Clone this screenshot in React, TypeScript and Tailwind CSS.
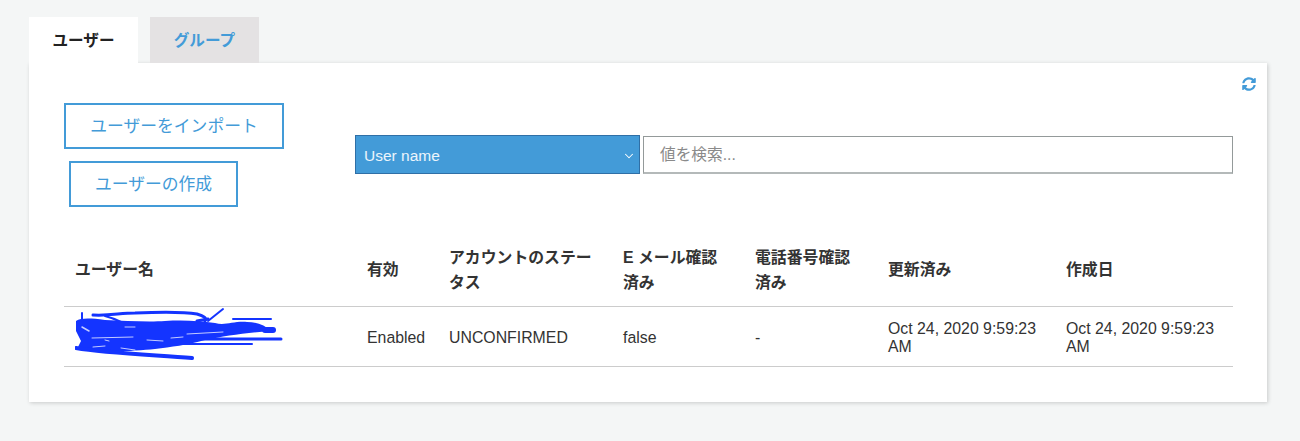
import { ChevronDown } from "lucide-react";
import { FaSyncAlt } from "react-icons/fa";

const FONT = "font-['Liberation_Sans','Noto_Sans_CJK_JP',sans-serif]";

const COLUMNS = [
  { label: "ユーザー名", cls: "w-[292px] pr-[10px]" },
  { label: "有効", cls: "w-[82px] pr-[10px]" },
  { label: "アカウントのステータス", cls: "w-[174px] pr-[10px]" },
  { label: "E メール確認済み", cls: "w-[132px] pr-[20px]" },
  { label: "電話番号確認済み", cls: "w-[133px] pr-[24px]" },
  { label: "更新済み", cls: "w-[178px] pr-[10px]" },
  { label: "作成日", cls: "w-[178px] pr-[10px]" },
];

// the name in the screenshot is scribbled over with a blue marker
function Scribble() {
  return (
    <svg width="210" height="58" viewBox="0 0 210 58" fill="none" className="block">
      <path
        d="M1 14 C6 11 14 11 30 13 C50 14 75 15 90 14 C110 13 125 14 140 16 C150 19 158 14 172 15 C182 15 190 18 196 24 C170 26 150 29 130 33 C112 38 96 40 80 42 C60 44 30 46 2 42 L6 34 L1 24 Z"
        fill="#1434ff"
      />
      <g stroke="#1434ff" strokeLinecap="round" strokeLinejoin="round">
        <path d="M7 6 V18" strokeWidth="2" />
        <path d="M18 8 C35 9 45 6 60 6 C85 5 110 5 122 7 C129 9 132 11 130 14" strokeWidth="3" />
        <path d="M30 9 C38 11 42 13 46 15" strokeWidth="2" />
        <path d="M133 14 L148 2" strokeWidth="2" />
        <path d="M122 14 L133 12" strokeWidth="3" />
        <path d="M158 12 L196 12" strokeWidth="2" />
        <path d="M190 23 L198 23" strokeWidth="6" />
        <path d="M108 32 L206 32" strokeWidth="3" />
        <path d="M100 37 L177 37" strokeWidth="2" />
        <path d="M1 41 C30 46 80 48 117 51" strokeWidth="4" />
      </g>
      <g stroke="#ffffff" strokeLinecap="round" opacity="0.75">
        <path d="M7 20 L14 24" strokeWidth="1.5" />
        <path d="M50 20 H60" strokeWidth="1" />
        <path d="M17 31 L58 30" strokeWidth="1" />
        <path d="M30 33 L34 34" strokeWidth="1" />
        <path d="M72 33 L88 34" strokeWidth="1" />
        <path d="M96 31 L108 30" strokeWidth="1" />
        <path d="M112 27 L148 25" strokeWidth="1" />
        <path d="M18 40 L30 39" strokeWidth="1" />
        <path d="M46 41 L60 43" strokeWidth="1" />
      </g>
    </svg>
  );
}

export default function App() {
  return (
    <div className={`h-[441px] w-[1300px] overflow-hidden bg-[#f4f6f6] pl-[29px] pt-[17px] text-[15.85px] text-[#333333] ${FONT}`}>
      {/* Tabs */}
      <div className="flex h-[46px] gap-[12px]">
        <div className="flex w-[109px] items-center justify-center bg-white pt-[1px] text-[15.6px] font-bold text-[#222222]">
          ユーザー
        </div>
        <div className="flex w-[109px] items-center justify-center bg-[#e4e2e3] pt-[1px] text-[15.6px] font-bold text-[#439bd8]">
          グループ
        </div>
      </div>

      {/* Card */}
      <div className="h-[339px] w-[1238px] bg-white pl-[35px] pr-[34px] shadow-[1px_1px_4px_rgba(0,0,0,0.18)]">
        <div className="flex h-[40px] items-start justify-end pt-[14px]">
          <FaSyncAlt className="mr-[-23px] text-[14px] text-[#439bd8]" />
        </div>

        <div className="flex h-[105px] items-start">
          <div className="flex w-[291px] flex-col items-start gap-[12px]">
            <button className="h-[46px] w-[220px] border-2 border-[#439bd8] pt-[2px] text-[16.8px] text-[#439bd8]">
              ユーザーをインポート
            </button>
            <button className="ml-[5px] h-[46px] w-[169px] border-2 border-[#439bd8] pt-[1px] text-[16.8px] text-[#439bd8]">
              ユーザーの作成
            </button>
          </div>
          <div className="mt-[32px] flex items-start gap-[3px]">
            <div className="flex h-[39px] w-[285px] items-center justify-between border border-[#2f6fa6] bg-[#439bd8] pl-[8px] pr-[3px] pt-[2px] text-[15.5px] text-white/90">
              <span>User name</span>
              <ChevronDown size={14} strokeWidth={1.75} className="text-white" />
            </div>
            <div className="mt-[1px] flex h-[38px] w-[590px] items-center border border-b-2 border-[#949a9a] border-b-[#b4b9b9] pl-[16px] pt-[1px] text-[15.7px] text-[#8a8a8a]">
              値を検索...
            </div>
          </div>
        </div>

        {/* Table */}
        <table className="w-[1169px] table-fixed border-collapse text-left">
          <thead>
            <tr className="h-[98px] border-b border-[#cccccc]">
              {COLUMNS.map((col) => (
                <th key={col.label} className={`${col.cls} pl-[11px] pt-[26px] align-middle font-bold leading-[25px] text-[#333333]`}>
                  {col.label}
                </th>
              ))}
            </tr>
          </thead>
          <tbody>
            <tr className="h-[60px] border-b border-[#cccccc] leading-[18px]">
              <td className="pl-[11px]">
                <Scribble />
              </td>
              <td className="pl-[11px] pt-[3px]">Enabled</td>
              <td className="pl-[11px] pt-[3px]">UNCONFIRMED</td>
              <td className="pl-[11px] pt-[3px]">false</td>
              <td className="pl-[11px] pt-[3px]">-</td>
              <td className="pl-[11px] pr-[10px] pt-[3px]">Oct 24, 2020 9:59:23 AM</td>
              <td className="pl-[11px] pr-[10px] pt-[3px]">Oct 24, 2020 9:59:23 AM</td>
            </tr>
          </tbody>
        </table>
      </div>
    </div>
  );
}
